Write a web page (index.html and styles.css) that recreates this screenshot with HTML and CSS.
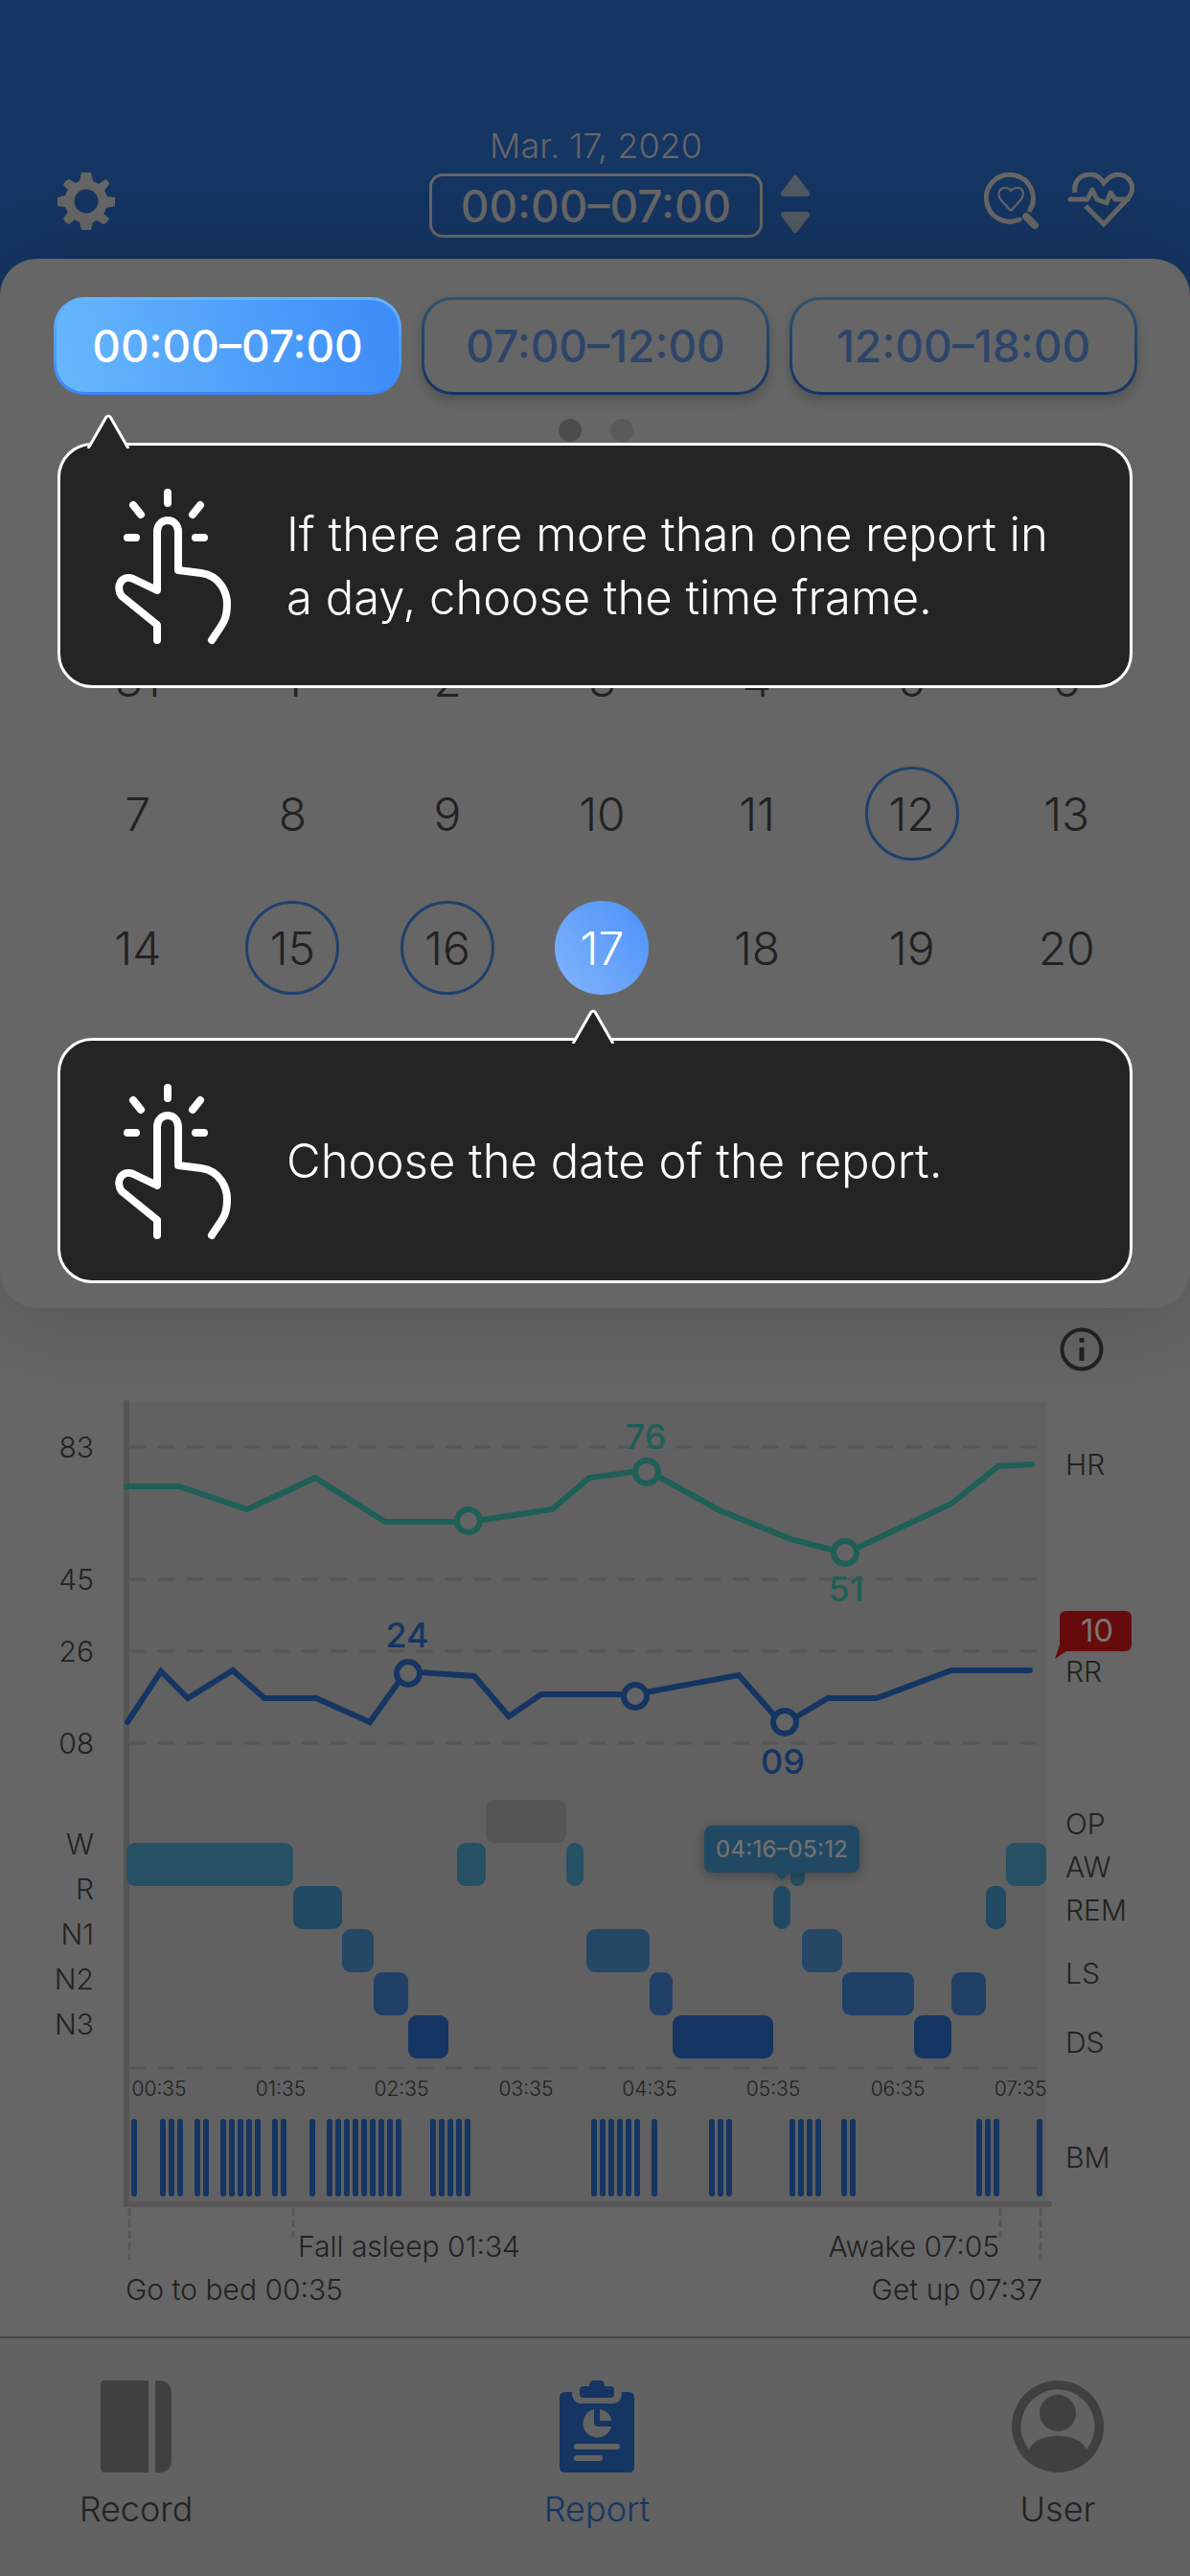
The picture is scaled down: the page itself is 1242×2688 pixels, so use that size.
FILE: index.html
```html
<!DOCTYPE html>
<html lang="en">
<head>
<meta charset="utf-8">
<meta name="viewport" content="width=device-width, initial-scale=1">
<title>Sleep report</title>
<link rel="stylesheet" href="styles.css">
</head>
<body>
<svg class="defs" aria-hidden="true">
  <symbol id="tap" viewBox="0 0 124 166">
    <g fill="none" stroke="currentColor" stroke-width="8" stroke-linecap="round" stroke-linejoin="round">
      <path d="M56 6v11M20 19l8 10M90 19l-8 10M14 53h9M85 53h9"/>
      <path d="M45 160V144L8 114C1 104 8 91 20 96L45 108V47C45 31 67 31 67 47V87L91 90C112 93 118 112 118 122C118 140 113 143 102 160" />
    </g>
  </symbol>
</svg>

<header class="header">
  <button class="icon-button" aria-label="Settings">
    <svg width="60" height="60" viewBox="0 0 60 60" fill="currentColor" fill-rule="evenodd"><path d="M25 0H35L37 9Q40 10 43 12L50 7Q53 8 54 12L49 19Q51 22 52 25L60 26V35L51 37Q50 40 48 43L54 48Q52 53 48 54L41 50Q39 51 37 52L35 60H25L23 52Q20 51 18 49L12 54Q8 53 6 48L11 41Q9 39 8 36L0 35V26L8 24Q9 21 11 18L6 13Q8 8 12 7L19 11Q21 10 23 9ZM30 17.500A12.500 12.500 0 1 0 30 42.500A12.500 12.500 0 1 0 30 17.500Z"/></svg>
  </button>
  <div class="period">
    <p class="date">Mar. 17, 2020</p>
    <button class="period-box">00:00–07:00</button>
    <svg class="arrows" width="32" height="62" viewBox="0 0 32 62" fill="currentColor" stroke="currentColor" stroke-width="6" stroke-linejoin="round"><path d="M16 4L28 20H4ZM16 58L28 42H4Z"/></svg>
  </div>
  <div class="actions">
    <button class="icon-button" aria-label="Search records">
      <svg width="60" height="60" viewBox="0 0 60 60" fill="none" stroke="currentColor" stroke-width="5" stroke-linecap="round"><path d="M37 49A24.500 24.500 0 1 1 48 39"/><path stroke-width="8" d="M44 46L53 55"/><path stroke-width="2" stroke-linejoin="round" d="M28 40L18 29C13 23 16 16 22 16C25 16 27 17 28 19C30 17 32 16 35 16C41 16 43 23 38 29Z"/></svg>
    </button>
    <button class="icon-button" aria-label="Heart health">
      <svg width="70" height="60" viewBox="0 0 70 60" fill="none" stroke="currentColor" stroke-width="5"><path d="M8 21C6 8 15 2 24 2C31 2 35 6 38 11C42 6 46 2 53 2C66 3 72 16 64 26L38 54L19 35"/><path stroke-linecap="round" stroke-linejoin="round" d="M3 28H21L26 18L31 28L41 32L45 21L50 28H63"/></svg>
    </button>
  </div>
</header>

<main>
  <section class="panel" aria-label="Report picker">
    <div class="tabs">
      <button class="tab tab-active">00:00–07:00</button>
      <button class="tab">07:00–12:00</button>
      <button class="tab">12:00–18:00</button>
    </div>
    <div class="dots"><span class="dot dot-on"></span><span class="dot"></span></div>
    <div class="calendar">
      <button class="day">31</button><button class="day">1</button><button class="day">2</button><button class="day">3</button><button class="day">4</button><button class="day">5</button><button class="day">6</button>
      <button class="day">7</button><button class="day">8</button><button class="day">9</button><button class="day">10</button><button class="day">11</button><button class="day marked">12</button><button class="day">13</button>
      <button class="day">14</button><button class="day marked">15</button><button class="day marked">16</button><button class="day selected">17</button><button class="day">18</button><button class="day">19</button><button class="day">20</button>
    </div>
    <div class="tip tip-time" role="tooltip">
      <svg class="tip-arrow" width="48" height="36" viewBox="0 0 48 36"><path d="M3 36L22 3Q24 1 26 3L45 36"/></svg>
      <svg class="tip-icon" width="124" height="166"><use href="#tap"/></svg>
      <p>If there are more than one report in<br>a day, choose the time frame.</p>
    </div>
    <div class="tip tip-date" role="tooltip">
      <svg class="tip-arrow" width="48" height="36" viewBox="0 0 48 36"><path d="M3 36L22 3Q24 1 26 3L45 36"/></svg>
      <svg class="tip-icon" width="124" height="166"><use href="#tap"/></svg>
      <p>Choose the date of the report.</p>
    </div>
  </section>

  <section class="report" aria-label="Sleep report">
    <div class="report-bar">
      <button class="icon-button" aria-label="About this report">
        <svg width="46" height="46" viewBox="0 0 46 46" fill="none" stroke="currentColor" stroke-width="4"><circle cx="23" cy="23" r="20.500"/><path stroke-width="5" d="M23 11v5M23 21v14"/></svg>
      </button>
    </div>
    <svg class="chart" viewBox="0 0 1242 977" role="img" aria-label="Heart rate, respiration, sleep stages and body movement">
      <g transform="translate(0 -1440)">
        <rect class="plot" x="132" y="1464" width="960" height="836"/>
        <path class="grid" d="M136 1510H1082M136 1648H1082M136 1723H1082M136 1819H1082M136 2158H1082"/>
        <path class="guide" d="M135 2304V2358M306 2304V2334M1044 2304V2334M1086 2304V2358"/>
        <path class="axis" d="M132 1464V2300H1095"/>

        <g class="label end">
          <text x="98" y="1521">83</text><text x="98" y="1659">45</text><text x="98" y="1734">26</text><text x="98" y="1830">08</text>
          <text x="98" y="1935">W</text><text x="98" y="1982">R</text><text x="98" y="2029">N1</text><text x="98" y="2076">N2</text><text x="98" y="2123">N3</text>
        </g>
        <g class="label">
          <text x="1112" y="1539">HR</text><text x="1112" y="1755">RR</text><text x="1112" y="1914">OP</text><text x="1112" y="1959">AW</text><text x="1112" y="2004">REM</text><text x="1112" y="2070">LS</text><text x="1112" y="2142">DS</text><text x="1112" y="2262">BM</text>
        </g>

        <g class="hr">
          <polyline points="132,1551 187,1551 258,1575 329,1542 402,1588 489,1588 576,1575 615,1542 675,1534 751,1576 825,1606 882,1621 993,1569 1042,1530 1077,1528"/>
          <circle cx="489" cy="1587" r="12"/><circle cx="675" cy="1536" r="12"/><circle cx="882" cy="1620" r="12"/>
          <text x="674" y="1512">76</text><text x="883" y="1671">51</text>
        </g>
        <g class="rr">
          <polyline points="133,1797 168,1744 196,1772 243,1743 276,1772 330,1772 386,1797 424,1744 495,1749 531,1791 565,1768 663,1768 771,1748 817,1800 864,1772 915,1772 993,1743 1075,1743"/>
          <circle cx="426" cy="1746" r="12"/><circle cx="663" cy="1770" r="12"/><circle cx="819" cy="1797" r="12"/>
          <text x="425" y="1719">24</text><text x="817" y="1851">09</text>
        </g>
        <g class="alert">
          <path d="M1113 1681H1174Q1181 1681 1181 1688V1716Q1181 1723 1174 1723H1113L1101 1731L1106 1716V1688Q1106 1681 1113 1681Z"/>
          <text x="1145" y="1713">10</text>
        </g>

        <g class="op"><rect x="507" y="1878" width="84" height="45" rx="9"/></g>
        <g class="aw"><rect x="132" y="1923" width="174" height="45" rx="9"/><rect x="477" y="1923" width="30" height="45" rx="9"/><rect x="591" y="1923" width="18" height="45" rx="9"/><rect x="825" y="1923" width="15" height="45" rx="7"/><rect x="1050" y="1923" width="42" height="45" rx="9"/></g>
        <g class="rem"><rect x="306" y="1968" width="51" height="45" rx="9"/><rect x="807" y="1968" width="18" height="45" rx="9"/><rect x="1029" y="1968" width="21" height="45" rx="9"/></g>
        <g class="n1"><rect x="357" y="2013" width="33" height="45" rx="9"/><rect x="612" y="2013" width="66" height="45" rx="9"/><rect x="837" y="2013" width="42" height="45" rx="9"/></g>
        <g class="n2"><rect x="390" y="2058" width="36" height="45" rx="9"/><rect x="678" y="2058" width="24" height="45" rx="9"/><rect x="879" y="2058" width="75" height="45" rx="9"/><rect x="993" y="2058" width="36" height="45" rx="9"/></g>
        <g class="n3"><rect x="426" y="2103" width="42" height="45" rx="9"/><rect x="702" y="2103" width="105" height="45" rx="9"/><rect x="954" y="2103" width="39" height="45" rx="9"/></g>
        <g class="span">
          <path d="M744 1905H888Q897 1905 897 1914V1945Q897 1954 888 1954H824L816 1962L808 1954H744Q735 1954 735 1945V1914Q735 1905 744 1905Z"/>
          <text x="816" y="1938">04:16–05:12</text>
        </g>

        <g class="hours">
          <text x="166" y="2187">00:35</text><text x="293" y="2187">01:35</text><text x="419" y="2187">02:35</text><text x="549" y="2187">03:35</text><text x="678" y="2187">04:35</text><text x="807" y="2187">05:35</text><text x="937" y="2187">06:35</text><text x="1065" y="2187">07:35</text>
        </g>
        <path class="moves" d="M140 2214v75M170 2214v75M179 2214v75M188 2214v75M206 2214v75M215 2214v75M233 2214v75M242 2214v75M251 2214v75M260 2214v75M269 2214v75M287 2214v75M296 2214v75M326 2214v75M344 2214v75M353 2214v75M362 2214v75M371 2214v75M380 2214v75M389 2214v75M398 2214v75M407 2214v75M416 2214v75M452 2214v75M461 2214v75M470 2214v75M479 2214v75M488 2214v75M620 2214v75M629 2214v75M638 2214v75M647 2214v75M656 2214v75M665 2214v75M683 2214v75M743 2214v75M752 2214v75M761 2214v75M827 2214v75M836 2214v75M845 2214v75M854 2214v75M881 2214v75M890 2214v75M1022 2214v75M1031 2214v75M1040 2214v75M1085 2214v75"/>
        <g class="label">
          <text x="311" y="2355">Fall asleep 01:34</text><text x="131" y="2400">Go to bed 00:35</text>
        </g>
        <g class="label end">
          <text x="1043" y="2355">Awake 07:05</text><text x="1088" y="2400">Get up 07:37</text>
        </g>
      </g>
    </svg>
  </section>
</main>

<nav class="nav">
  <a href="#record"><svg width="74" height="96" viewBox="0 0 74 96" fill="currentColor"><path d="M4 0H50V96H4Q0 96 0 92V4Q0 0 4 0ZM57 0H62Q74 1 74 14V82Q74 95 62 96H57Z"/></svg>Record</a>
  <a href="#report" class="current" aria-current="page"><svg width="78" height="96" viewBox="0 0 78 96" fill="currentColor" fill-rule="evenodd"><path d="M6 12H13Q13 24 23 24H55Q65 24 65 12H72Q78 12 78 18V90Q78 96 72 96H6Q0 96 0 90V18Q0 12 6 12ZM36 30A15 15 0 1 0 54 48H40Q36 48 36 44ZM42 30V42H54Q53 32 42 30ZM18 66A3 3 0 0 0 18 72H60A3 3 0 0 0 60 66ZM18 78A3 3 0 0 0 18 84H42A3 3 0 0 0 42 78Z"/><path d="M31 6A8 8 0 0 1 47 6H53Q57 6 57 10V14Q57 18 53 18H25Q21 18 21 14V10Q21 6 25 6Z"/></svg>Report</a>
  <a href="#user"><svg width="96" height="96" viewBox="0 0 96 96" fill="currentColor" fill-rule="evenodd"><path d="M48 0A48 48 0 1 0 48 96A48 48 0 1 0 48 0ZM18 72A38.500 38.500 0 1 1 78 72C70 53 26 53 18 72Z"/><circle cx="48" cy="34" r="19"/></svg>User</a>
</nav>
</body>
</html>
```
FILE: styles.css
```css
:root {
  --blue: #153562;
  --dim: #666;
  --ink: #222;
}

* { box-sizing: border-box; }

body {
  margin: 0;
  background: var(--dim);
  color: var(--ink);
  font-family: Inter, "Noto Sans", sans-serif;
  font-weight: 300;
}

p { margin: 0; }

button {
  padding: 0;
  border: 0;
  background: none;
  color: inherit;
  font: inherit;
}

svg { display: block; }

.defs { position: absolute; width: 0; height: 0; }

/* Header */
.header {
  display: grid;
  grid-template-columns: 1fr auto 1fr;
  align-items: start;
  height: 330px;
  padding: 131px 58px 0 60px;
  background: var(--blue);
  color: var(--dim);
}

.header > .icon-button,
.actions { margin-top: 49px; }

.icon-button { justify-self: start; }

.actions {
  display: flex;
  justify-self: end;
  gap: 27px;
}

.period {
  display: grid;
  grid-template-columns: 32px auto 32px;
  column-gap: 18px;
  row-gap: 8px;
}

.date {
  grid-column: 1 / -1;
  font-size: 36px;
  line-height: 42px;
  text-align: center;
}

.period-box {
  grid-column: 2;
  width: 348px;
  height: 67px;
  border: 3px solid var(--dim);
  border-radius: 14px;
  font-size: 46px;
  font-weight: 500;
}

.arrows { color: #515963; margin-top: 1px; }

/* Picker panel */
.panel {
  position: relative;
  margin-top: -60px;
  padding: 40px 55px 306px 56px;
  border-radius: 38px;
  background: var(--dim);
  box-shadow: 0 6px 100px rgba(0, 0, 0, .2);
}

.tabs {
  display: grid;
  grid-template-columns: repeat(3, 1fr);
  gap: 21px;
}

.tab {
  height: 102px;
  border: 3px solid transparent;
  border-radius: 32px;
  background:
    linear-gradient(var(--dim), var(--dim)) padding-box,
    linear-gradient(#2c536f, var(--blue)) border-box;
  box-shadow: 0 6px 12px rgba(0, 0, 0, .2);
  color: #2d4569;
  font-size: 46px;
  font-weight: 500;
}

.tab-active {
  background:
    linear-gradient(80deg, #66b8fc, #3c8bf8) padding-box,
    linear-gradient(#66b4fc, #3c86f6) border-box;
  box-shadow: none;
  color: #fff;
}

.dots {
  display: flex;
  justify-content: center;
  gap: 30px;
  padding: 25px 0 0;
}

.dot {
  width: 24px;
  height: 24px;
  border-radius: 50%;
  background: #5a5a5a;
}

.dot-on { background: #4c4c4c; }

.calendar {
  display: grid;
  grid-template-columns: repeat(7, 1fr);
  grid-auto-rows: 140px;
  place-items: center;
  margin: 178px -7px 0 7px;
}

.day {
  width: 98px;
  height: 98px;
  border-radius: 50%;
  font-size: 48px;
}

.marked { border: 3px solid #20406c; }

.selected {
  background: linear-gradient(50deg, #82b4fd, #4c91f8);
  color: #fff;
}

.tip {
  position: absolute;
  left: 60px;
  right: 60px;
  display: flex;
  align-items: center;
  gap: 56px;
  height: 256px;
  padding: 2px 56px 0;
  border: 3px solid #fff;
  border-radius: 36px;
  background: #242424;
  color: #fff;
  font-size: 49px;
  line-height: 66px;
}

.tip-time { top: 192px; }
.tip-date { top: 813px; }

.tip-icon { flex: none; }

.tip-arrow {
  position: absolute;
  top: -33px;
  fill: #242424;
  stroke: #fff;
  stroke-width: 3;
}

.tip-time .tip-arrow { left: 26px; }
.tip-date .tip-arrow { left: calc(50% - 26px); }

/* Chart */
.report-bar {
  display: flex;
  justify-content: flex-end;
  padding: 20px 90px 9px;
}

.chart {
  width: 100%;
  height: auto;
}

.chart text { fill: var(--ink); }
.label text { font-size: 30px; }
.end text { text-anchor: end; }
.plot { fill: #616161; }
.grid { stroke: #565656; stroke-width: 3; stroke-linecap: round; stroke-dasharray: 15 15; }
.guide { stroke: #565656; stroke-width: 3; stroke-dasharray: 8 4; }
.axis { fill: none; stroke: #555; stroke-width: 6; stroke-linecap: round; }

.hr { stroke: #1e5f57; }
.rr { stroke: var(--blue); }
.hr polyline,
.rr polyline { fill: none; stroke-width: 6; stroke-linecap: round; }
.hr circle,
.rr circle { fill: #646464; stroke-width: 6; }
.chart .hr text,
.chart .rr text { stroke: none; font-size: 36px; font-weight: 500; text-anchor: middle; }
.chart .hr text { fill: #1e5f57; }
.chart .rr text { fill: var(--blue); }

.alert { fill: #660b0b; }
.chart .alert text { fill: #777; font-size: 33px; font-weight: 400; text-anchor: middle; }

.op { fill: #555; }
.aw { fill: #265063; }
.rem { fill: #214963; }
.n1 { fill: #264866; }
.n2 { fill: #204068; }
.n3 { fill: var(--blue); }

.span { fill: #214963; filter: drop-shadow(0 3px 6px rgba(0, 0, 0, .3)); }
.chart .span text { fill: #707070; font-size: 24px; font-weight: 500; text-anchor: middle; }

.hours text { font-size: 21px; text-anchor: middle; }
.moves { stroke: var(--blue); stroke-width: 6; stroke-linecap: round; }

/* Bottom navigation */
.nav {
  display: flex;
  justify-content: space-between;
  margin-top: 21px;
  padding: 44px 76px 48px 80px;
  border-top: 2px solid #484848;
  background: #626262;
}

.nav a {
  display: flex;
  flex-direction: column;
  align-items: center;
  gap: 16px;
  width: 124px;
  color: var(--ink);
  font-size: 36px;
  line-height: 44px;
  text-decoration: none;
}

.nav svg { color: #404040; }
.nav .current,
.nav .current svg { color: var(--blue); }
```
